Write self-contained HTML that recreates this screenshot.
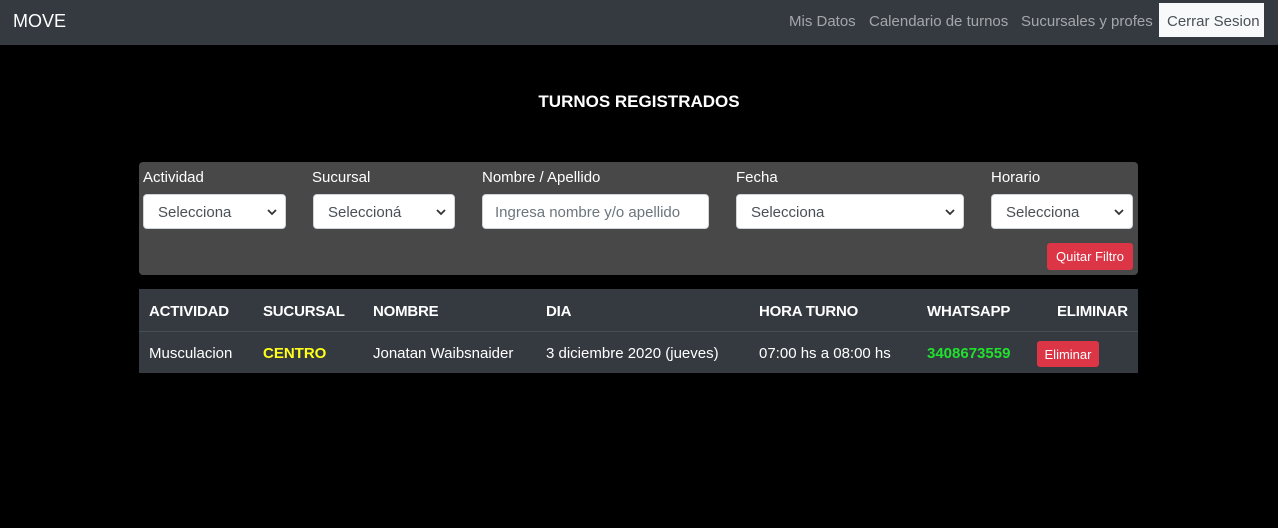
<!DOCTYPE html>
<html><head><meta charset="utf-8"><style>
*{box-sizing:border-box;margin:0;padding:0}
body{width:1278px;height:528px;background:#000;font-family:"Liberation Sans",Arial,sans-serif;position:relative;overflow:hidden;color:#fff}
.a{position:absolute;white-space:nowrap}
nav{position:absolute;left:0;top:0;width:1278px;height:45px;background:#343a40}
.nl{font-size:15px;color:rgba(255,255,255,.55);top:13px}
.lab{font-size:15px;top:169px;color:#fff}
.sel{position:absolute;top:194px;height:35px;background:#fff;border:1px solid #ced4da;border-radius:4px;color:#495057;font-size:15px;padding:9px 14px 0}
.sel svg{position:absolute;right:8px;top:13px}
.th{font-size:15px;font-weight:bold;top:303px;letter-spacing:-0.2px}
.td{font-size:15px;top:345px}
</style></head><body>
<nav></nav>
<div class="a" style="left:13px;top:11px;font-size:18px;color:#fff">MOVE</div>
<div class="a nl" style="left:789px">Mis Datos</div>
<div class="a nl" style="left:869px">Calendario de turnos</div>
<div class="a nl" style="left:1021px">Sucursales y profes</div>
<div class="a" style="left:1159px;top:3px;width:105px;height:34px;background:#f8f9fa;color:#495057;font-size:15px;padding:10px 0 0 8px">Cerrar Sesion</div>
<div class="a" style="left:0;width:1278px;text-align:center;top:92px;font-size:17px;font-weight:bold">TURNOS REGISTRADOS</div>
<div class="a" style="left:139px;top:162px;width:999px;height:113px;background:#484848;border-radius:4px"></div>
<div class="a lab" style="left:143px">Actividad</div>
<div class="a lab" style="left:312px">Sucursal</div>
<div class="a lab" style="left:482px">Nombre / Apellido</div>
<div class="a lab" style="left:736px">Fecha</div>
<div class="a lab" style="left:991px">Horario</div>
<div class="sel" style="left:143px;width:143px">Selecciona<svg width="10" height="8"><path d="M1 2l4 4 4-4" stroke="#333" stroke-width="1.8" fill="none"/></svg></div>
<div class="sel" style="left:313px;width:142px">Seleccioná<svg width="10" height="8"><path d="M1 2l4 4 4-4" stroke="#333" stroke-width="1.8" fill="none"/></svg></div>
<div class="sel" style="left:482px;width:227px;color:#6c757d;padding-left:12px">Ingresa nombre y/o apellido</div>
<div class="sel" style="left:736px;width:228px">Selecciona<svg width="10" height="8"><path d="M1 2l4 4 4-4" stroke="#333" stroke-width="1.8" fill="none"/></svg></div>
<div class="sel" style="left:991px;width:142px">Selecciona<svg width="10" height="8"><path d="M1 2l4 4 4-4" stroke="#333" stroke-width="1.8" fill="none"/></svg></div>
<div class="a" style="left:1047px;top:243px;width:86px;height:27px;background:#dc3545;border-radius:3px;font-size:13px;text-align:center;line-height:28px">Quitar Filtro</div>
<div class="a" style="left:139px;top:289px;width:999px;height:84px;background:#343a40"></div>
<div class="a" style="left:139px;top:331px;width:999px;height:1px;background:#454d55"></div>
<div class="a th" style="left:149px">ACTIVIDAD</div>
<div class="a th" style="left:263px">SUCURSAL</div>
<div class="a th" style="left:373px">NOMBRE</div>
<div class="a th" style="left:546px">DIA</div>
<div class="a th" style="left:759px">HORA TURNO</div>
<div class="a th" style="left:927px">WHATSAPP</div>
<div class="a th" style="left:1057px">ELIMINAR</div>
<div class="a td" style="left:149px">Musculacion</div>
<div class="a td" style="left:263px;color:#ffff1a;font-weight:bold">CENTRO</div>
<div class="a td" style="left:373px">Jonatan Waibsnaider</div>
<div class="a td" style="left:546px">3 diciembre 2020 (jueves)</div>
<div class="a td" style="left:759px">07:00 hs a 08:00 hs</div>
<div class="a td" style="left:927px;color:#22e12e;font-weight:bold">3408673559</div>
<div class="a" style="left:1037px;top:341px;width:62px;height:26px;background:#dc3545;border-radius:3px;font-size:13px;text-align:center;line-height:27px">Eliminar</div>
</body></html>
